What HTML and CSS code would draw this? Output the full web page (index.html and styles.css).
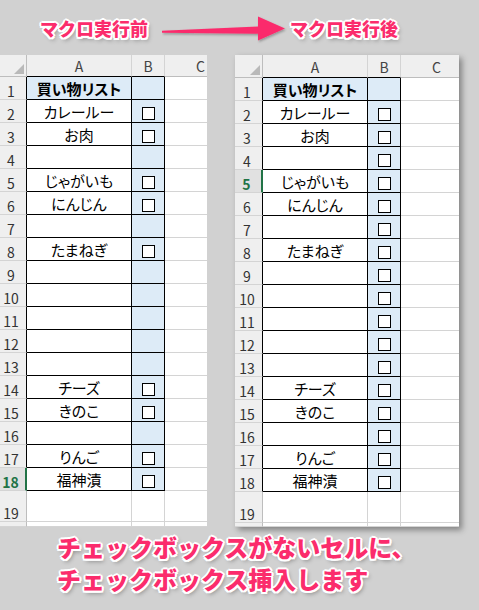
FILE: index.html
```html
<!DOCTYPE html>
<html lang="ja">
<head>
<meta charset="utf-8">
<title>マクロ実行前後</title>
<link rel="stylesheet" href="styles.css">
</head>
<body>
<div class="page">
  <div class="titles">
    <span class="title">マクロ実行前</span>
    <svg class="arrow" viewBox="0 0 125 30" aria-hidden="true">
      <defs>
        <filter id="ash" x="-10%" y="-30%" width="120%" height="160%">
          <feDropShadow dx="1" dy="1.5" stdDeviation="1" flood-color="#000" flood-opacity="0.3"/>
        </filter>
      </defs>
      <polygon points="0,16.8 96,12.6 96,2.5 123,14.5 96,26.5 96,19.8 0,18.8" fill="#fb2c6c" filter="url(#ash)"/>
    </svg>
    <span class="title title-after">マクロ実行後</span>
  </div>

  <div class="sheets">
    <div class="sheet sheet-left">
      <div class="corner"><span class="tri"></span></div>
      <div class="ch tb">A</div>
      <div class="ch tb">B</div>
      <div class="ch">C</div>

      <div class="rh tb">1</div><div class="c t blue bold">買い物リスト</div><div class="c t blue"></div><div class="c"></div>
      <div class="rh tb">2</div><div class="c t">カレールー</div><div class="c t blue"><span class="cb"></span></div><div class="c"></div>
      <div class="rh tb">3</div><div class="c t">お肉</div><div class="c t blue"><span class="cb"></span></div><div class="c"></div>
      <div class="rh tb">4</div><div class="c t"></div><div class="c t blue"></div><div class="c"></div>
      <div class="rh tb">5</div><div class="c t">じゃがいも</div><div class="c t blue"><span class="cb"></span></div><div class="c"></div>
      <div class="rh tb">6</div><div class="c t">にんじん</div><div class="c t blue"><span class="cb"></span></div><div class="c"></div>
      <div class="rh tb">7</div><div class="c t"></div><div class="c t blue"></div><div class="c"></div>
      <div class="rh tb">8</div><div class="c t">たまねぎ</div><div class="c t blue"><span class="cb"></span></div><div class="c"></div>
      <div class="rh tb">9</div><div class="c t"></div><div class="c t blue"></div><div class="c"></div>
      <div class="rh tb">10</div><div class="c t"></div><div class="c t blue"></div><div class="c"></div>
      <div class="rh tb">11</div><div class="c t"></div><div class="c t blue"></div><div class="c"></div>
      <div class="rh tb">12</div><div class="c t"></div><div class="c t blue"></div><div class="c"></div>
      <div class="rh tb">13</div><div class="c t"></div><div class="c t blue"></div><div class="c"></div>
      <div class="rh tb">14</div><div class="c t">チーズ</div><div class="c t blue"><span class="cb"></span></div><div class="c"></div>
      <div class="rh tb">15</div><div class="c t">きのこ</div><div class="c t blue"><span class="cb"></span></div><div class="c"></div>
      <div class="rh tb">16</div><div class="c t"></div><div class="c t blue"></div><div class="c"></div>
      <div class="rh tb">17</div><div class="c t">りんご</div><div class="c t blue"><span class="cb"></span></div><div class="c"></div>
      <div class="rh sel">18</div><div class="c t">福神漬</div><div class="c t blue"><span class="cb"></span></div><div class="c"></div>
      <div class="rh">19</div><div class="c"></div><div class="c"></div><div class="c"></div>
      <div class="rh"></div><div class="c"></div><div class="c"></div><div class="c"></div>
    </div>

    <div class="sheet sheet-right">
      <div class="corner"><span class="tri"></span></div>
      <div class="ch tb">A</div>
      <div class="ch tb">B</div>
      <div class="ch">C</div>

      <div class="rh tb">1</div><div class="c t blue bold">買い物リスト</div><div class="c t blue"></div><div class="c"></div>
      <div class="rh tb">2</div><div class="c t">カレールー</div><div class="c t blue"><span class="cb"></span></div><div class="c"></div>
      <div class="rh tb">3</div><div class="c t">お肉</div><div class="c t blue"><span class="cb"></span></div><div class="c"></div>
      <div class="rh tb">4</div><div class="c t"></div><div class="c t blue"><span class="cb"></span></div><div class="c"></div>
      <div class="rh sel">5</div><div class="c t">じゃがいも</div><div class="c t blue"><span class="cb"></span></div><div class="c"></div>
      <div class="rh tb">6</div><div class="c t">にんじん</div><div class="c t blue"><span class="cb"></span></div><div class="c"></div>
      <div class="rh tb">7</div><div class="c t"></div><div class="c t blue"><span class="cb"></span></div><div class="c"></div>
      <div class="rh tb">8</div><div class="c t">たまねぎ</div><div class="c t blue"><span class="cb"></span></div><div class="c"></div>
      <div class="rh tb">9</div><div class="c t"></div><div class="c t blue"><span class="cb"></span></div><div class="c"></div>
      <div class="rh tb">10</div><div class="c t"></div><div class="c t blue"><span class="cb"></span></div><div class="c"></div>
      <div class="rh tb">11</div><div class="c t"></div><div class="c t blue"><span class="cb"></span></div><div class="c"></div>
      <div class="rh tb">12</div><div class="c t"></div><div class="c t blue"><span class="cb"></span></div><div class="c"></div>
      <div class="rh tb">13</div><div class="c t"></div><div class="c t blue"><span class="cb"></span></div><div class="c"></div>
      <div class="rh tb">14</div><div class="c t">チーズ</div><div class="c t blue"><span class="cb"></span></div><div class="c"></div>
      <div class="rh tb">15</div><div class="c t">きのこ</div><div class="c t blue"><span class="cb"></span></div><div class="c"></div>
      <div class="rh tb">16</div><div class="c t"></div><div class="c t blue"><span class="cb"></span></div><div class="c"></div>
      <div class="rh tb">17</div><div class="c t">りんご</div><div class="c t blue"><span class="cb"></span></div><div class="c"></div>
      <div class="rh tb">18</div><div class="c t">福神漬</div><div class="c t blue"><span class="cb"></span></div><div class="c"></div>
      <div class="rh">19</div><div class="c"></div><div class="c"></div><div class="c"></div>
      <div class="rh"></div><div class="c"></div><div class="c"></div><div class="c"></div>
    </div>
  </div>

  <div class="caption">チェックボックスがないセルに、<br>チェックボックス挿入します</div>
</div>
</body>
</html>
```

FILE: styles.css
```css
* { box-sizing: border-box; }

body {
  margin: 0;
  width: 479px;
  height: 610px;
  overflow: hidden;
  background: #d1d1d1;
  font-family: "Noto Sans CJK JP", "Noto Sans", sans-serif;
}

.page {
  display: flex;
  flex-direction: column;
}

/* ---------- titles ---------- */
.titles {
  height: 55px;
  display: flex;
  align-items: center;
  padding-left: 40px;
}

.title,
.caption {
  color: #fb2c6c;
  font-weight: 900;
  white-space: nowrap;
  text-shadow:
    2px 0 0 #fff, -2px 0 0 #fff, 0 2px 0 #fff, 0 -2px 0 #fff,
    1.5px 1.5px 0 #fff, -1.5px 1.5px 0 #fff, 1.5px -1.5px 0 #fff, -1.5px -1.5px 0 #fff,
    2px 3px 4px rgba(0, 0, 0, 0.35);
}

.title {
  width: 108px;
  font-size: 18px;
  line-height: 1;
}

.arrow {
  width: 125px;
  height: 30px;
  margin-left: 14px;
  margin-top: 2px;
}

.title-after { margin-left: 3px; }

/* ---------- sheets ---------- */
.sheets {
  display: flex;
  gap: 28px;
  height: 472px;
  align-items: flex-start;
}

.sheet {
  display: grid;
  overflow: hidden;
  background: #fff;
  height: 472px;
}

.sheet-left {
  width: 207px;
  grid-template-columns: 27px 105px 33px 72px;
  grid-template-rows: 22px repeat(18, 23px) 31px 5px;
}

.sheet-right {
  width: 224px;
  grid-template-columns: 28px 105px 33px 72px;
  grid-template-rows: 23px repeat(18, 23px) 31px 4px;
  box-shadow: 3px 3px 6px rgba(0, 0, 0, 0.38);
}

.c, .ch, .rh, .corner {
  border-right: 1px solid #d4d4d4;
  border-bottom: 1px solid #d4d4d4;
  display: flex;
  align-items: flex-end;
  justify-content: center;
  min-width: 0;
}

.corner {
  background: #efefef;
  border-right-color: #bdbdbd;
  border-bottom-color: #bdbdbd;
  justify-content: flex-end;
  padding: 0 2px 2px 0;
}

.tri {
  width: 0;
  height: 0;
  border-left: 10px solid transparent;
  border-bottom: 10px solid #b9b9b9;
}

.ch {
  background: #efefef;
  border-bottom-color: #bdbdbd;
  color: #444;
  font-size: 14px;
  line-height: 16px;
  padding-bottom: 2px;
  font-weight: 400;
}

.ch.tb { border-bottom-color: #000; }

.rh {
  background: #efefef;
  border-right-color: #bdbdbd;
  border-bottom-color: #d4d4d4;
  color: #333;
  font-size: 14px;
  line-height: 16px;
  padding-bottom: 0;
}

.sheet-left .rh { padding-right: 4px; }
.sheet-right .rh { padding-right: 3px; }

.rh.tb { border-right-color: #000; }

.rh.sel {
  background: #e1e1e1;
  color: #217346;
  font-weight: 700;
  border-right: 2px solid #217346;
}

.c {
  font-size: 15px;
  line-height: 18px;
  color: #000;
  padding-bottom: 1px;
  font-feature-settings: "palt";
  white-space: nowrap;
}

.c.t {
  border-right-color: #000;
  border-bottom-color: #000;
}

.blue { background: #ddebf7; }
.bold { font-weight: 700; }

.cb {
  width: 13px;
  height: 13px;
  border: 1px solid #000;
  background: #fff;
  margin-bottom: 1px;
  margin-left: 1px;
}

/* ---------- caption ---------- */
.caption {
  margin-top: 4px;
  padding-left: 57px;
  font-size: 24px;
  line-height: 32px;
}
```
